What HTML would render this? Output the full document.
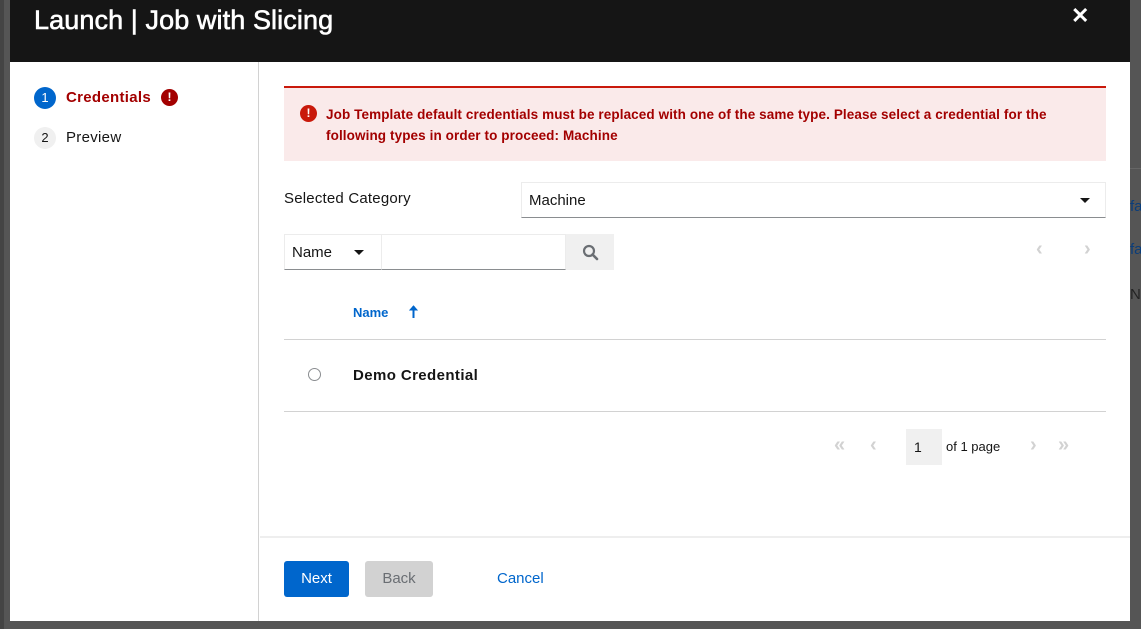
<!DOCTYPE html>
<html><head><meta charset="utf-8"><style>
*{box-sizing:border-box;margin:0;padding:0}
body{width:1141px;height:629px;overflow:hidden;background:#555;font-family:"Liberation Sans",sans-serif;position:relative}
.abs{position:absolute}
.modal{left:10px;top:0;width:1120px;height:621px;background:#fff}
.hdr{left:0;top:0;width:1120px;height:62px;background:#151515}
.t{color:#fff;font-size:27px;left:24px;top:5px;font-weight:normal;-webkit-text-stroke:0.6px #fff;letter-spacing:0.1px}
.x{color:#fff;font-size:22px;font-weight:bold;left:1061px;top:3px}
.nav{left:0;top:62px;width:249px;height:559px;border-right:1px solid #d2d2d2}
.num{width:22px;height:22px;border-radius:50%;font-size:13px;text-align:center;line-height:22px}
.alert{left:274px;top:86px;width:822px;height:75px;background:#faeaea;border-top:2px solid #c9190b;color:#a30000;font-weight:bold;font-size:13.5px;line-height:21px;padding:16px 0 0 42px;letter-spacing:0.1px}
.ic{width:17px;height:17px;border-radius:50%;background:#c9190b;color:#fff;font-size:12px;font-weight:bold;text-align:center;line-height:17px}
.sel{left:511px;top:182px;width:585px;height:36px;border:1px solid #ececec;border-bottom:1px solid #8a8d90;font-size:15px;padding:9px 7px;color:#151515}
.caret{width:0;height:0;border-left:5px solid transparent;border-right:5px solid transparent;border-top:5px solid #151515}
.bl{color:#06c}
.pg{color:#d2d2d2;font-size:20px;font-weight:bold}
</style></head><body>
<div class="abs" style="left:0;top:0;width:4px;height:629px;background:#444"></div>
<div class="abs" style="left:1130px;top:168px;width:11px;height:1px;background:#666"></div>
<div class="abs bl" style="left:1130px;top:198px;font-size:15px;color:#0a3d7a">fa</div>
<div class="abs bl" style="left:1130px;top:241px;font-size:15px;color:#0a3d7a">fa</div>
<div class="abs" style="left:1130px;top:286px;font-size:15px;color:#222">N</div>
<div class="abs modal">
 <div class="abs hdr"><div class="abs t">Launch | Job with Slicing</div><div class="abs x">✕</div></div>
 <div class="abs nav">
  <div class="abs num" style="left:24px;top:25px;background:#06c;color:#fff">1</div>
  <div class="abs" style="left:56px;top:27px;font-size:15px;color:#a30000;font-weight:bold;letter-spacing:0.3px">Credentials</div>
  <div class="abs ic" style="left:151px;top:27px;background:#a30000">!</div>
  <div class="abs num" style="left:24px;top:65px;background:#f0f0f0;color:#151515">2</div>
  <div class="abs" style="left:56px;top:67px;font-size:15px;color:#151515;letter-spacing:0.3px">Preview</div>
 </div>
 <div class="abs alert">Job Template default credentials must be replaced with one of the same type. Please select a credential for the<br>following types in order to proceed: Machine</div>
 <div class="abs ic" style="left:290px;top:105px">!</div>
 <div class="abs" style="left:274px;top:190px;font-size:15px;color:#151515;letter-spacing:0.2px">Selected Category</div>
 <div class="abs sel">Machine<div class="abs caret" style="left:558px;top:15px"></div></div>
 <div class="abs" style="left:274px;top:234px;width:98px;height:36px;border:1px solid #ececec;border-bottom:1px solid #8a8d90;font-size:15px;padding:9px 7px;color:#151515">Name<div class="abs caret" style="left:69px;top:15px"></div></div>
 <div class="abs" style="left:372px;top:234px;width:184px;height:36px;border:1px solid #ececec;border-left:none;border-bottom:1px solid #8a8d90"></div>
 <div class="abs" style="left:556px;top:234px;width:48px;height:36px;background:#f0f0f0">
  <svg class="abs" style="left:16px;top:10px" width="17" height="17" viewBox="0 0 17 17"><circle cx="7" cy="7" r="5" fill="none" stroke="#6a6e73" stroke-width="2.2"/><path d="M10.5 10.5L15 15" stroke="#6a6e73" stroke-width="2.6" stroke-linecap="round"/></svg>
 </div>
 <div class="abs pg" style="left:1026px;top:238px">‹</div>
 <div class="abs pg" style="left:1074px;top:238px">›</div>
 <div class="abs bl" style="left:343px;top:305px;font-size:13px;font-weight:bold">Name</div>
 <svg class="abs" style="left:399px;top:305px" width="9" height="14" viewBox="0 0 9 14"><path d="M4.5 1V13" stroke="#06c" stroke-width="2"/><path d="M1 5L4.5 1L8 5Z" fill="#06c" stroke="#06c"/></svg>
 <div class="abs" style="left:274px;top:339px;width:822px;height:1px;background:#d2d2d2"></div>
 <div class="abs" style="left:298px;top:368px;width:13px;height:13px;border:1px solid #8a8d90;border-radius:50%"></div>
 <div class="abs" style="left:343px;top:367px;font-size:15px;font-weight:bold;color:#151515;letter-spacing:0.4px">Demo Credential</div>
 <div class="abs" style="left:274px;top:411px;width:822px;height:1px;background:#d2d2d2"></div>
 <div class="abs pg" style="left:824px;top:434px">«</div>
 <div class="abs pg" style="left:860px;top:434px">‹</div>
 <div class="abs" style="left:896px;top:429px;width:36px;height:36px;background:#f0f0f0;font-size:14px;padding:10px 0 0 8px;color:#151515">1</div>
 <div class="abs" style="left:936px;top:439px;font-size:13px;color:#151515">of 1 page</div>
 <div class="abs pg" style="left:1020px;top:434px">›</div>
 <div class="abs pg" style="left:1048px;top:434px">»</div>
 <div class="abs" style="left:250px;top:536px;width:870px;height:2px;background:#eee"></div>
 <div class="abs" style="left:274px;top:561px;width:65px;height:36px;background:#06c;border-radius:3px;color:#fff;font-size:15px;text-align:center;line-height:36px">Next</div>
 <div class="abs" style="left:355px;top:561px;width:68px;height:36px;background:#d2d2d2;border-radius:3px;color:#6a6e73;font-size:15px;text-align:center;line-height:36px">Back</div>
 <div class="abs bl" style="left:487px;top:570px;font-size:15px">Cancel</div>
</div>
</body></html>
